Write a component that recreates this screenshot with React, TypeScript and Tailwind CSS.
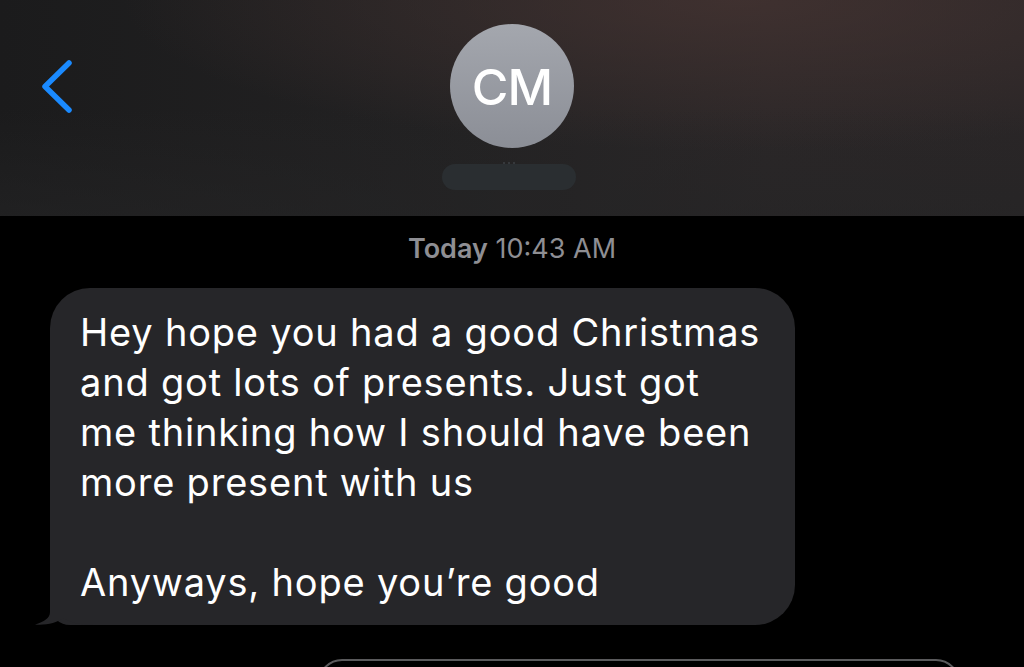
import React from "react";

export default function App() {
  const lines = [
    "Hey hope you had a good Christmas",
    "and got lots of presents. Just got",
    "me thinking how I should have been",
    "more present with us",
    "\u00a0",
    "Anyways, hope you\u2019re good",
  ];
  return (
    <div
      className="w-[1024px] h-[667px] overflow-hidden bg-black relative"
      style={{ fontFamily: "Inter, 'Liberation Sans', sans-serif" }}
    >
      {/* Header */}
      <div className="relative h-[216px] bg-[linear-gradient(90deg,#1b1b1c_0%,#232223_45%,#2b2728_75%,#2a2627_100%)]">
        <div className="absolute inset-0 bg-[radial-gradient(ellipse_60%_70%_at_72%_0%,rgba(70,52,50,0.75),rgba(60,45,44,0)_100%)]" />
        <div className="absolute inset-0 bg-[linear-gradient(180deg,rgba(0,0,0,0)_50%,rgba(36,36,37,0.6)_100%)]" />
        <div className="relative flex h-full">
          <div className="w-[100px] pl-[40px] pt-[59px]">
            <svg width="36" height="54" viewBox="0 0 36 54">
              <path
                d="M29 4 L5 27.5 L29 51"
                fill="none"
                stroke="#1a8aff"
                strokeWidth="5.5"
                strokeLinecap="round"
                strokeLinejoin="round"
              />
            </svg>
          </div>
          <div className="flex-1 flex flex-col items-center pt-[24px] pr-[100px]">
            <div className="w-[124px] h-[124px] rounded-full bg-[linear-gradient(180deg,#a4a7ae_0%,#8b8e96_100%)] flex items-center justify-center">
              <span className="text-white text-[50px] font-medium tracking-[-1px] leading-none mt-[2px]">
                CM
              </span>
            </div>
            <div className="flex gap-[3px] mt-[14px] h-[2px] mr-[7px]">
              <span className="w-[2px] h-[2px] rounded-full bg-[#3c4044]" />
              <span className="w-[2px] h-[2px] rounded-full bg-[#3c4044]" />
              <span className="w-[2px] h-[2px] rounded-full bg-[#3c4044]" />
            </div>
            <div className="w-[134px] h-[26px] rounded-full bg-[#2a2e31] mr-[7px]" />
          </div>
        </div>
      </div>

      {/* Timestamp */}
      <div className="pt-[18px] text-center text-[27px] leading-[30px] text-[#8e8e93]">
        <span className="font-semibold">Today</span> 10:43 AM
      </div>

      {/* Bubble */}
      <div className="relative ml-[50px] mt-[24px] w-[745px]">
        <div className="absolute inset-0 rounded-[40px] rounded-bl-[20px] bg-[#262629]" />
        <svg
          className="absolute left-[-16px] bottom-0"
          width="60"
          height="40"
          viewBox="0 0 60 40"
        >
          <path
            d="M16 0 L16 27 C16 33 10 37 1 39.5 C12 40.5 22 38 30 33 C36 37 44 40 60 40 L60 0 Z"
            fill="#262629"
          />
        </svg>
        <div className="relative pl-[30px] pt-[19px] pb-[18px] text-white text-[38px] leading-[50px] tracking-[0.8px]">
          {lines.map((l, i) => (
            <div key={i} className="whitespace-nowrap">
              {l}
            </div>
          ))}
        </div>
      </div>

      {/* Next bubble outline */}
      <div className="absolute left-[318px] top-[659px] w-[642px] h-[60px] rounded-[24px] border-2 border-[#5a5a5c]" />
    </div>
  );
}
